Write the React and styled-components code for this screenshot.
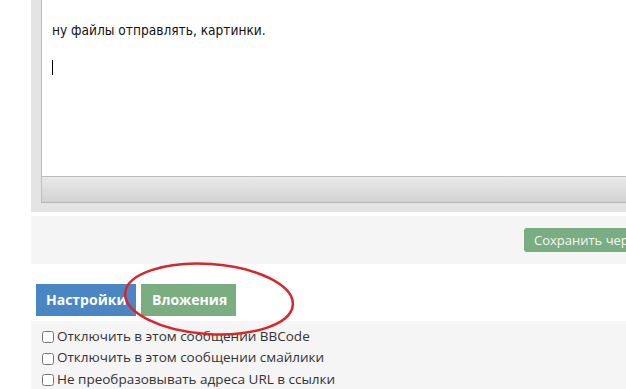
import React from "react";
import styled, { createGlobalStyle } from "styled-components";

const GlobalStyle = createGlobalStyle`
  html, body {
    margin: 0;
    padding: 0;
    background: #fff;
    width: 626px;
    height: 389px;
    overflow: hidden;
  }
`;

const Page = styled.div`
  position: relative;
  padding-left: 31px;
  font-family: "Open Sans", "Noto Sans", sans-serif;
  color: #333;
`;

const EditorPanel = styled.div`
  background: #e4e4e4;
  padding: 0 0 9px 10px;
`;

const Editor = styled.div`
  border-left: 1px solid #bdbdbd;
`;

const TextArea = styled.div`
  height: 176px;
  box-sizing: border-box;
  background: #fff;
  padding: 19px 10px;
  font-family: "DejaVu Sans Condensed", "DejaVu Sans", sans-serif;
  font-size: 13.6px;
  color: #111;
`;

const Line = styled.div`
  height: 22px;
  line-height: 22px;
`;

const Caret = styled.div`
  margin-top: 19px;
  width: 1px;
  height: 15px;
  background: #000;
`;

const StatusBar = styled.div`
  height: 27px;
  box-sizing: border-box;
  border-top: 1px solid #bcbcbc;
  border-bottom: 1px solid #b4b4b4;
  background: linear-gradient(#e9e9e9, #d2d2d2);
`;

const SaveRow = styled.div`
  margin-top: 4px;
  height: 48px;
  box-sizing: border-box;
  background: #f5f5f5;
  padding: 12px 0 0 493px;
  overflow: hidden;
`;

const SaveButton = styled.button`
  height: 24px;
  border: none;
  border-radius: 3px;
  background: #7bad82;
  color: #f4f8f4;
  font-family: "Open Sans", sans-serif;
  font-size: 13px;
  padding: 0 10px;
  white-space: nowrap;
`;

const Tabs = styled.div`
  display: flex;
  gap: 5px;
  margin-top: 20px;
  padding-left: 5px;
  height: 32px;
`;

const Tab = styled.div`
  width: ${(p) => p.$w}px;
  box-sizing: border-box;
  padding-left: ${(p) => p.$pad}px;
  background: ${(p) => p.$bg};
  color: #fff;
  font-weight: 700;
  font-size: 14px;
  line-height: 32px;
  white-space: nowrap;
  overflow: hidden;
`;

const Options = styled.div`
  margin-top: 5px;
  background: #f5f5f5;
  padding: 4px 0 10px 11px;
`;

const Option = styled.label`
  display: flex;
  align-items: center;
  height: 21.5px;
  font-size: 13.5px;
  color: #333;
  white-space: nowrap;

  input {
    width: 12px;
    height: 12px;
    margin: 3px 3px 0 0;
  }
`;

const Ring = styled.svg`
  position: absolute;
  left: 118px;
  top: 256px;
  pointer-events: none;
`;

export default function App() {
  return (
    <Page>
      <GlobalStyle />
      <EditorPanel>
        <Editor>
          <TextArea>
            <Line>ну файлы отправлять, картинки.</Line>
            <Caret />
          </TextArea>
          <StatusBar />
        </Editor>
      </EditorPanel>
      <SaveRow>
        <SaveButton type="button">Сохранить черновик</SaveButton>
      </SaveRow>
      <Tabs>
        <Tab $w={100} $pad={10} $bg="#4a85c4">Настройки</Tab>
        <Tab $w={95} $pad={11} $bg="#7aad80">Вложения</Tab>
      </Tabs>
      <Options>
        <Option><input type="checkbox" />Отключить в этом сообщении BBCode</Option>
        <Option><input type="checkbox" />Отключить в этом сообщении смайлики</Option>
        <Option><input type="checkbox" />Не преобразовывать адреса URL в ссылки</Option>
      </Options>
      <Ring width="185" height="90" viewBox="0 0 185 90">
        <ellipse
          cx="91"
          cy="43"
          rx="84"
          ry="35"
          fill="none"
          stroke="#d8262b"
          strokeWidth="2.5"
          transform="rotate(4 91 43)"
        />
      </Ring>
    </Page>
  );
}
